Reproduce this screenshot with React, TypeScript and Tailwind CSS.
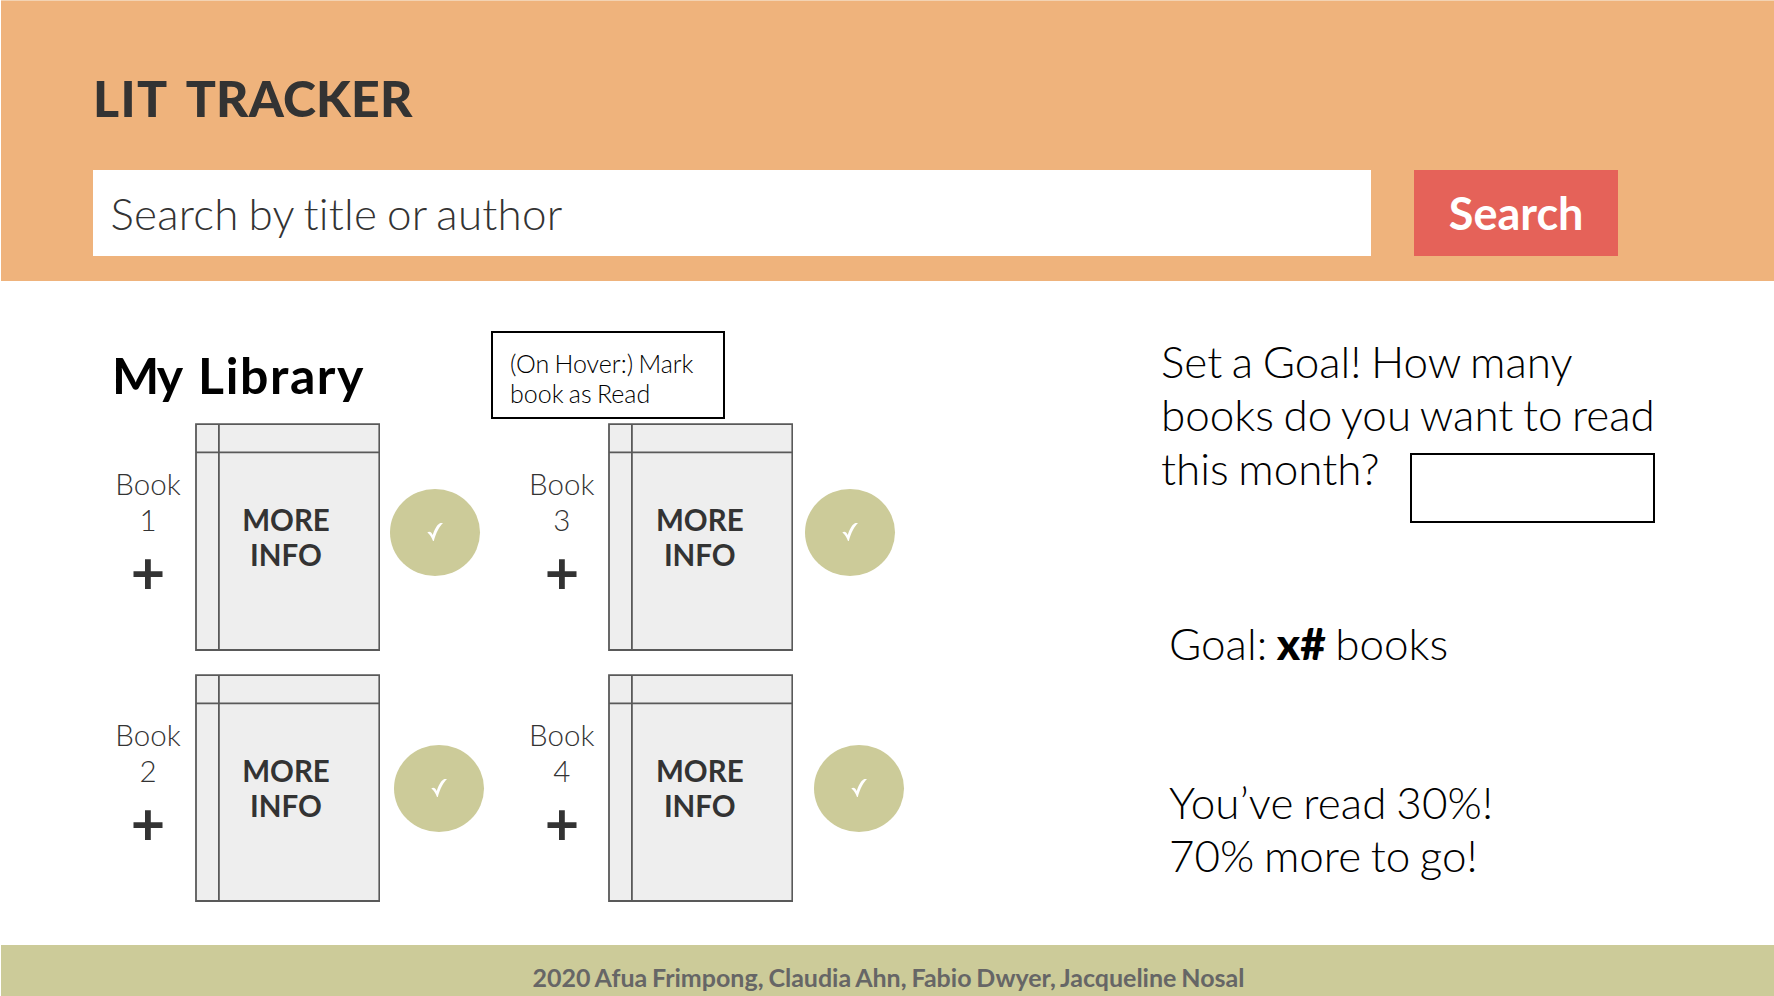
type BookProps = { number: number };

function Book({ number }: BookProps) {
  return (
    <div className="flex h-[229px] w-[274px] shrink-0">
      <div className="flex w-[84px] shrink-0 flex-col items-center pt-[44px] pr-[7px] text-[#333333]">
        <div className="w-[70px] text-center text-[29.5px] font-light leading-[36px]">
          Book
          <br />
          {number}
        </div>
        <svg className="mt-[21px] h-[30px] w-[30px]" viewBox="0 0 30 30">
          <path d="M0.5 15.2H29.5M14.9 0.2V30" stroke="#333333" strokeWidth="5.8" />
        </svg>
      </div>
      <button className="relative h-[229px] w-[186px] shrink-0">
        <svg className="absolute inset-0" width="186" height="229" viewBox="0 0 186 229">
          <path
            d="M2 2.2H185.3V228H2ZM24.9 2.2V228M2 30.4H185.3"
            fill="#eeeeee"
            stroke="#595959"
            strokeWidth="1.8"
          />
        </svg>
        <div className="relative h-full pt-[80px] pr-[1px] text-center text-[29.5px] font-bold leading-[35px] text-[#333333]">
          MORE
          <br />
          INFO
        </div>
      </button>
    </div>
  );
}

function ReadMark() {
  return (
    <button className="flex h-[87px] w-[90px] shrink-0 items-center justify-center rounded-[50%] bg-[#cccb99]">
      <svg className="h-[18px] w-[16px]" viewBox="0 0 16 18">
        <path d="M0.3 9.6C2.5 8 4.2 9 5.7 12C7.5 6.2 10 1.8 12.5 0.4C13.6 0 15 0 15.9 0.2C12.4 3.2 9 9.8 6.8 17.9H6C4.5 14.5 2.8 11.5 0.3 9.6Z" fill="white" />
      </svg>
    </button>
  );
}

export default function App() {
  return (
    <div className="relative flex h-[996px] w-[1774px] flex-col overflow-hidden bg-white pl-px font-['Lato',sans-serif] text-black [font-variant-ligatures:none]">
      <header className="h-[281px] shrink-0 border-t border-[#f3d3b3] bg-[#efb37c] pl-[92px]">
        <h1 className="flex h-[168.5px] items-start gap-[17px] pt-[67px] text-[50px] font-black leading-[60px] text-[#333333]">
          <span className="tracking-[1.4px]">LIT</span>
          <span className="tracking-[0.2px]">TRACKER</span>
        </h1>
        <div className="flex h-[86.5px] gap-[43.3px]">
          <div className="flex w-[1278px] items-center bg-white pl-[17.5px] text-[44px] font-light tracking-[0.23px] text-[#333333] [word-spacing:-2.4px]">
            <span className="whitespace-nowrap">Search by title or author</span>
          </div>
          <button className="flex w-[203.7px] items-center justify-center bg-[#e56259] pt-[2px] text-[45px] font-bold text-white">
            Search
          </button>
        </div>
      </header>

      <main className="flex h-[664px] shrink-0">
        <section className="w-[1160px] shrink-0">
          <h2 className="flex h-[141px] gap-[17px] pt-[64px] pl-[111px] text-[50px] font-bold leading-[60px]">
            <span className="tracking-[-2px]">My</span>
            <span className="tracking-[1.6px]">Library</span>
          </h2>
          <div className="flex h-[251px] pl-[108.5px]">
            <Book number={1} />
            <div className="w-[139.8px] shrink-0 pt-[66.6px] pl-[6.5px]">
              <ReadMark />
            </div>
            <Book number={3} />
            <div className="pt-[66.6px] pl-[7.7px]">
              <ReadMark />
            </div>
          </div>
          <div className="flex h-[251px] pl-[108.5px]">
            <Book number={2} />
            <div className="w-[139.8px] shrink-0 pt-[71.8px] pl-[10.7px]">
              <ReadMark />
            </div>
            <Book number={4} />
            <div className="pt-[71.8px] pl-[16.5px]">
              <ReadMark />
            </div>
          </div>
        </section>

        <section className="flex-1 text-[44px] font-light leading-[53.5px] [word-spacing:-2.4px]">
          <div className="relative h-[281px] pt-[53.5px]">
            <p className="whitespace-nowrap">
              Set a Goal! How many
              <br />
              books do you want to read
              <br />
              this month?
            </p>
            <div className="absolute left-[249px] top-[172px] h-[70px] w-[245px] border-2 border-black bg-white" />
          </div>
          <p className="h-[159px] pt-[55px] pl-[8px]">
            Goal: <b className="font-black">x#</b> books
          </p>
          <p className="whitespace-nowrap pt-[55px] pl-[8px] leading-[53.3px]">
            <span className="tracking-[0.13px]">You’ve read 30%!</span>
            <br />
            70% more to go!
          </p>
        </section>
      </main>

      <footer className="flex h-[51px] shrink-0 justify-center bg-[#cccb99] pt-[17px] pl-[2px] text-[25px] font-bold leading-[30px] text-[#666666] [word-spacing:-1.2px]">
        2020 Afua Frimpong, Claudia Ahn, Fabio Dwyer, Jacqueline Nosal
      </footer>

      <div className="absolute left-[491px] top-[331px] h-[88px] w-[234px] whitespace-nowrap border-2 border-black bg-white pt-[15px] pl-[17px] text-[25px] font-light leading-[30px] [word-spacing:-1.5px]">
        (On Hover:) Mark
        <br />
        book as Read
      </div>
    </div>
  );
}
